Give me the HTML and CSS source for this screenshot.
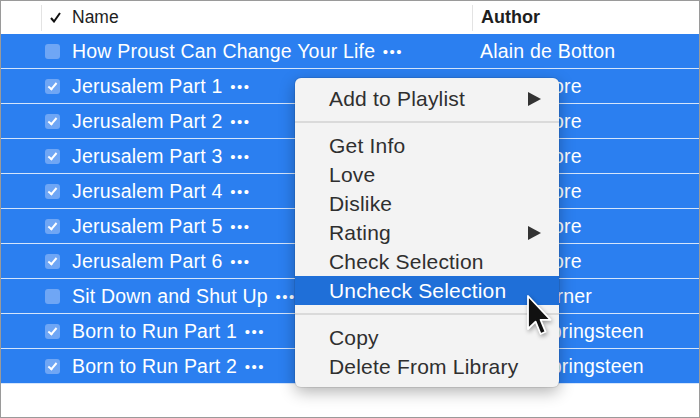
FILE: index.html
```html
<!DOCTYPE html>
<html>
<head>
    <title>Library - Books</title>
    <link rel="stylesheet" href="styles.css">
</head>
<body>
    <div class="window">
        <div class="header">
            <div class="cell lead"></div>
            <div class="cell check-col">
                <svg width="11" height="11" viewBox="0 0 11 11"><path d="M1 6 L4 9.5 L10 1" fill="none" stroke="#111" stroke-width="2"/></svg>
            </div>
            <div class="cell name-col">Name</div>
            <div class="cell author-col">Author</div>
        </div>

        <div class="rows">
            <div class="row">
                <div class="cell lead"></div>
                <div class="cell check-col"><span class="box"></span></div>
                <div class="cell name-col">How Proust Can Change Your Life <span class="more">•••</span></div>
                <div class="cell author-col">Alain de Botton</div>
            </div>
            <div class="row">
                <div class="cell lead"></div>
                <div class="cell check-col"><span class="box checked"></span></div>
                <div class="cell name-col">Jerusalem Part 1 <span class="more">•••</span></div>
                <div class="cell author-col">Alan Moore</div>
            </div>
            <div class="row">
                <div class="cell lead"></div>
                <div class="cell check-col"><span class="box checked"></span></div>
                <div class="cell name-col">Jerusalem Part 2 <span class="more">•••</span></div>
                <div class="cell author-col">Alan Moore</div>
            </div>
            <div class="row">
                <div class="cell lead"></div>
                <div class="cell check-col"><span class="box checked"></span></div>
                <div class="cell name-col">Jerusalem Part 3 <span class="more">•••</span></div>
                <div class="cell author-col">Alan Moore</div>
            </div>
            <div class="row">
                <div class="cell lead"></div>
                <div class="cell check-col"><span class="box checked"></span></div>
                <div class="cell name-col">Jerusalem Part 4 <span class="more">•••</span></div>
                <div class="cell author-col">Alan Moore</div>
            </div>
            <div class="row">
                <div class="cell lead"></div>
                <div class="cell check-col"><span class="box checked"></span></div>
                <div class="cell name-col">Jerusalem Part 5 <span class="more">•••</span></div>
                <div class="cell author-col">Alan Moore</div>
            </div>
            <div class="row">
                <div class="cell lead"></div>
                <div class="cell check-col"><span class="box checked"></span></div>
                <div class="cell name-col">Jerusalem Part 6 <span class="more">•••</span></div>
                <div class="cell author-col">Alan Moore</div>
            </div>
            <div class="row">
                <div class="cell lead"></div>
                <div class="cell check-col"><span class="box"></span></div>
                <div class="cell name-col">Sit Down and Shut Up <span class="more">•••</span></div>
                <div class="cell author-col">Brad Warner</div>
            </div>
            <div class="row">
                <div class="cell lead"></div>
                <div class="cell check-col"><span class="box checked"></span></div>
                <div class="cell name-col">Born to Run Part 1 <span class="more">•••</span></div>
                <div class="cell author-col">Bruce Springsteen</div>
            </div>
            <div class="row">
                <div class="cell lead"></div>
                <div class="cell check-col"><span class="box checked"></span></div>
                <div class="cell name-col">Born to Run Part 2 <span class="more">•••</span></div>
                <div class="cell author-col">Bruce Springsteen</div>
            </div>
        </div>

        <div class="menu">
            <div class="item">Add to Playlist <span class="arrow"></span></div>
            <div class="sep"></div>
            <div class="item">Get Info</div>
            <div class="item">Love</div>
            <div class="item">Dislike</div>
            <div class="item">Rating <span class="arrow"></span></div>
            <div class="item">Check Selection</div>
            <div class="item active">Uncheck Selection</div>
            <div class="sep"></div>
            <div class="item">Copy</div>
            <div class="item">Delete From Library</div>
        </div>

        <svg class="cursor" width="26" height="42" viewBox="0 0 13 21">
            <path d="M0.5 0.5 L0.5 17 L4.3 13.3 L6.8 19.5 L9.3 18.4 L6.8 12.4 L11.8 12.4 Z" fill="#111" stroke="#fff" stroke-width="0.9" stroke-linejoin="round"/>
        </svg>
    </div>
</body>
</html>
```

FILE: styles.css
```css
* {
    box-sizing: border-box;
}
body {
    margin: 0;
    font-family: "Liberation Sans", Arial, sans-serif;
}
.window {
    position: relative;
    width: 700px;
    height: 418px;
    border: 1px solid #9a9a9a;
    background: #fff;
    overflow: hidden;
}
.header {
    display: flex;
    height: 33px;
    align-items: center;
    font-size: 17.5px;
    color: #1e1e1e;
}
.header .cell {
    height: 26px;
    display: flex;
    align-items: center;
}
.header .check-col,
.header .author-col {
    border-left: 1px solid #e3e3e3;
}
.header .check-col {
    justify-content: center;
}
.header .author-col {
    font-weight: bold;
    font-size: 18px;
}
.lead {
    width: 40px;
}
.check-col {
    width: 23px;
    padding-left: 4px;
}
.name-col {
    width: 408px;
    padding-left: 8px;
    white-space: nowrap;
}
.author-col {
    flex: 1;
    padding-left: 8px;
    white-space: nowrap;
}
.row {
    display: flex;
    align-items: center;
    height: 35px;
    background: #2b7ff0;
    border-bottom: 1px solid #d4e5fc;
    color: #fff;
    font-size: 19.5px;
    letter-spacing: 0.2px;
}
.row .check-col {
    display: flex;
    align-items: center;
}
.box {
    display: block;
    width: 15px;
    height: 15px;
    border-radius: 3px;
    background: #6fa6f5;
    position: relative;
}
.box.checked::after {
    content: "";
    position: absolute;
    left: 5px;
    top: 2px;
    width: 3px;
    height: 7px;
    border: solid #fff;
    border-width: 0 2px 2px 0;
    transform: rotate(40deg);
}
.more {
    font-size: 15px;
    letter-spacing: 1.5px;
    margin-left: 2px;
    vertical-align: 1px;
}
.menu {
    position: absolute;
    left: 294px;
    top: 77px;
    width: 264px;
    padding: 6px 0;
    background: #f3f3f3;
    border-radius: 6px;
    box-shadow: 0 5px 16px rgba(0, 0, 0, 0.3), 0 0 0 1px rgba(0, 0, 0, 0.08);
    color: #2f2f2f;
    font-size: 21px;
    letter-spacing: 0.2px;
}
.item {
    height: 29px;
    display: flex;
    align-items: center;
    justify-content: space-between;
    padding: 0 18px 0 34px;
}
.item.active {
    background: #1f6fd8;
    color: #fff;
}
.sep {
    height: 18px;
    display: flex;
    align-items: center;
}
.sep::before {
    content: "";
    flex: 1;
    height: 2px;
    background: #dadada;
}
.arrow {
    width: 0;
    height: 0;
    border-left: 13px solid #333;
    border-top: 7px solid transparent;
    border-bottom: 7px solid transparent;
}
.cursor {
    position: absolute;
    left: 526px;
    top: 294px;
    filter: drop-shadow(1px 2px 2px rgba(0, 0, 0, 0.35));
}
```
